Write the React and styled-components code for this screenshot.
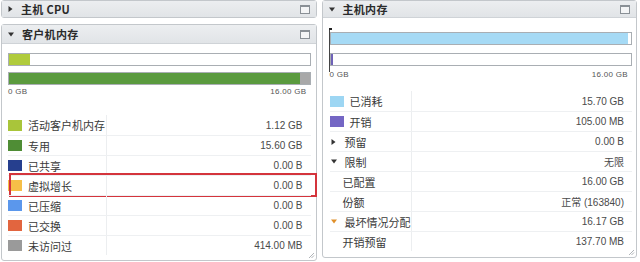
import React from 'react'
import styled, { createGlobalStyle } from 'styled-components'

const GlobalStyle = createGlobalStyle`
  html, body {
    margin: 0;
    padding: 0;
    background: #ffffff;
  }
  body {
    width: 640px;
    height: 262px;
    overflow: hidden;
    font-family: "Liberation Sans", "Noto Sans CJK SC", sans-serif;
    color: #333;
  }
`

const guestRows = [
  { color: '#a9c53a', label: '活动客户机内存', value: '1.12 GB' },
  { color: '#4f8d35', label: '专用', value: '15.60 GB' },
  { color: '#263f8e', label: '已共享', value: '0.00 B' },
  { color: '#f6bf48', label: '虚拟增长', value: '0.00 B', marked: true },
  { color: '#5b97ec', label: '已压缩', value: '0.00 B' },
  { color: '#e2653f', label: '已交换', value: '0.00 B' },
  { color: '#9a9a9a', label: '未访问过', value: '414.00 MB' },
]

const hostRows = [
  { color: '#9dd6f3', label: '已消耗', value: '15.70 GB' },
  { color: '#7466c4', label: '开销', value: '105.00 MB' },
  { arrow: 'right', label: '预留', value: '0.00 B' },
  { arrow: 'down', label: '限制', value: '无限' },
  { indent: true, label: '已配置', value: '16.00 GB' },
  { indent: true, label: '份额', value: '正常 (163840)' },
  { arrow: 'down', arrowColor: '#e0902a', label: '最坏情况分配', value: '16.17 GB' },
  { indent: true, label: '开销预留', value: '137.70 MB' },
]

const Page = styled.div`
  display: flex;
  gap: 5px;
  padding: 0 3px 0 1px;
`

const Column = styled.div`
  display: flex;
  flex-direction: column;
  gap: 6px;
  width: ${p => p.width}px;
`

const Panel = styled.div`
  border: 1px solid #c3c7cb;
  border-radius: 3px;
  background: #fff;
  height: ${p => p.height ? `${p.height}px` : 'auto'};
  display: flex;
  flex-direction: column;
  position: relative;
  box-sizing: border-box;
`

const Header = styled.div`
  display: flex;
  align-items: center;
  height: ${p => p.height}px;
  padding: 0 6px 0 6px;
  background: linear-gradient(#eceef0, #e1e4e7);
  border-bottom: ${p => p.collapsed ? 'none' : '1px solid #cfd3d7'};
  font-family: "Noto Sans CJK SC", "Liberation Sans", sans-serif;
  font-weight: 700;
  font-size: 11px;
  color: #2a2a2a;
  flex-shrink: 0;
`

const HeaderTitle = styled.span`
  flex: 1;
  margin-left: 8px;
  letter-spacing: 0.3px;
`

const MaxBox = styled.span`
  width: 8px;
  height: 6px;
  border: 1px solid #8a9096;
  border-top-width: 2px;
  background: #f4f5f6;
`

const Body = styled.div`
  flex: 1;
  padding: ${p => p.pad};
  display: flex;
  flex-direction: column;
`

const BarWrap = styled.div`
  position: relative;
  display: flex;
  flex-direction: column;
  gap: ${p => p.gap}px;
`

const Bar = styled.div`
  height: 11px;
  border: 1px solid #a9aeb3;
  background: ${p => p.bg || '#fff'};
  display: flex;
`

const Fill = styled.div`
  background: ${p => p.color};
`

const Marker = styled.div`
  position: absolute;
  left: -1px;
  top: -4px;
  bottom: -6px;
  width: 1px;
  background: #444;
  &::before {
    content: '';
    position: absolute;
    left: 0;
    top: 0;
    width: 3px;
    height: 2px;
    background: #222;
  }
`

const Scale = styled.div`
  display: flex;
  justify-content: space-between;
  font-size: 8px;
  color: #555;
  margin-top: ${p => p.top}px;
  padding: 0 ${p => p.right}px 0 0;
  letter-spacing: 0.3px;
`

const Table = styled.div`
  margin-top: ${p => p.top}px;
  display: flex;
  flex-direction: column;
`

const Row = styled.div`
  display: grid;
  grid-template-columns: ${p => p.split}px 1fr;
  height: 20px;
  border-top: 1px solid #eef0f2;
  box-sizing: border-box;
  position: relative;
  &:first-child {
    border-top: none;
  }
`

const LabelCell = styled.div`
  display: flex;
  align-items: center;
  gap: ${p => p.gap}px;
  padding-left: ${p => p.pad}px;
  border-right: 1px solid #eceef0;
  font-family: "Noto Sans CJK SC", "Liberation Sans", sans-serif;
  font-size: 11px;
  color: #3a3a3a;
`

const ValueCell = styled.div`
  display: flex;
  align-items: center;
  justify-content: flex-end;
  padding-right: ${p => p.pad}px;
  font-family: "Liberation Sans", "Noto Sans CJK SC", sans-serif;
  font-size: 10px;
  color: #4a4a4a;
`

const Swatch = styled.span`
  width: 14px;
  height: 11px;
  background: ${p => p.color};
  flex-shrink: 0;
`

const ArrowSlot = styled.span`
  width: 8px;
  display: flex;
  justify-content: center;
  flex-shrink: 0;
`

const Highlight = styled.div`
  position: absolute;
  left: 1px;
  right: -6px;
  top: -3px;
  bottom: -2px;
  border: 2px solid #d4343c;
  pointer-events: none;
`

const Grip = styled.svg`
  position: absolute;
  right: 1px;
  bottom: 1px;
`

function Triangle({ dir = 'down', color = '#333' }) {
  return dir === 'down' ? (
    <svg width="6" height="5" viewBox="0 0 6 5"><path d="M0 0.5 L6 0.5 L3 4.5 Z" fill={color} /></svg>
  ) : (
    <svg width="5" height="6" viewBox="0 0 5 6"><path d="M0.5 0 L4.5 3 L0.5 6 Z" fill={color} /></svg>
  )
}

function ResizeGrip() {
  return (
    <Grip width="7" height="7" viewBox="0 0 7 7">
      <path d="M6 1 L1 6 M6 3.5 L3.5 6" stroke="#b0b4b8" strokeWidth="1" />
    </Grip>
  )
}

function PanelHeader({ title, open, height, collapsed }) {
  return (
    <Header height={height} collapsed={collapsed}>
      <Triangle dir={open ? 'down' : 'right'} color="#333" />
      <HeaderTitle>{title}</HeaderTitle>
      <MaxBox />
    </Header>
  )
}

export default function App() {
  return (
    <>
      <GlobalStyle />
      <Page>
        <Column width={316}>
          <Panel>
            <PanelHeader title="主机 CPU" height={16} collapsed />
          </Panel>
          <Panel height={237}>
            <PanelHeader title="客户机内存" open height={18} />
            <Body pad="9px 5px 0 6px">
              <BarWrap gap={6}>
                <Bar><Fill color="#b0cb3c" style={{ width: '7%' }} /></Bar>
                <Bar bg="#a8a8a8"><Fill color="#5a9a3e" style={{ width: '97%' }} /></Bar>
              </BarWrap>
              <Scale top={2} right={4}>
                <span>0 GB</span>
                <span>16.00 GB</span>
              </Scale>
              <Table top={19}>
                {guestRows.map(r => (
                  <Row key={r.label} split={99}>
                    <LabelCell pad={0} gap={6}>
                      <Swatch color={r.color} />
                      {r.label}
                    </LabelCell>
                    <ValueCell pad={8}>{r.value}</ValueCell>
                    {r.marked && <Highlight />}
                  </Row>
                ))}
              </Table>
            </Body>
            <ResizeGrip />
          </Panel>
        </Column>
        <Column width={316}>
          <Panel height={258}>
            <PanelHeader title="主机内存" open height={16} />
            <Body pad="14px 4px 0 7px">
              <BarWrap gap={8}>
                <Marker />
                <Bar><Fill color="#a6daf5" style={{ width: '99%' }} /></Bar>
                <Bar><Fill color="#6f62b8" style={{ width: '0.7%' }} /></Bar>
              </BarWrap>
              <Scale top={4} right={4}>
                <span>0 GB</span>
                <span>16.00 GB</span>
              </Scale>
              <Table top={12}>
                {hostRows.map(r => (
                  <Row key={r.label} split={82}>
                    <LabelCell pad={r.indent ? 13 : 0} gap={r.arrow ? 7 : 6}>
                      {r.color && <Swatch color={r.color} />}
                      {r.arrow && (
                        <ArrowSlot>
                          <Triangle dir={r.arrow} color={r.arrowColor || '#333'} />
                        </ArrowSlot>
                      )}
                      {r.label}
                    </LabelCell>
                    <ValueCell pad={8}>{r.value}</ValueCell>
                  </Row>
                ))}
              </Table>
            </Body>
            <ResizeGrip />
          </Panel>
        </Column>
      </Page>
    </>
  )
}
